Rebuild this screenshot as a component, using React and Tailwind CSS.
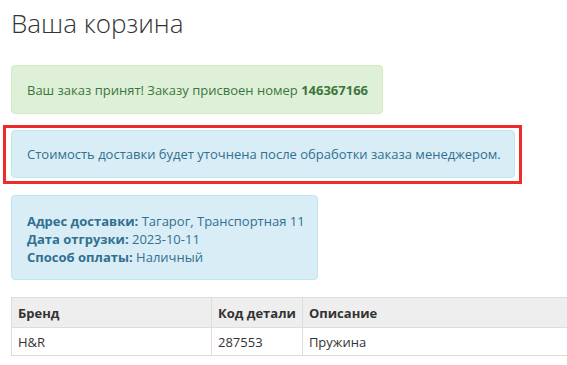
import React from 'react';

const font = { fontFamily: '"Open Sans", "Noto Sans", sans-serif' };

const App = () => {
    return (
        <div className="w-[567px] h-[365px] overflow-hidden bg-white text-[13px] leading-[18px] text-[#333]" style={font}>
            <div className="pl-[11px]">
                <h1 className="pt-[5px] text-[26px] leading-[36px] font-light text-[#333]">Ваша корзина</h1>

                <div className="mt-[24px] w-[372px] h-[49px] flex items-center px-[15px] rounded bg-[#dff0d8] border border-[#d6e9c6] text-[#3c763d] whitespace-nowrap">
                    <span>Ваш заказ принят! Заказу присвоен номер <b className="font-bold">146367166</b></span>
                </div>

                <div className="relative mt-[16px] w-[504px]">
                    <div className="h-[48px] flex items-center px-[15px] rounded bg-[#d9edf7] border border-[#bce8f1] text-[#31708f] whitespace-nowrap">
                        Стоимость доставки будет уточнена после обработки заказа менеджером.
                    </div>
                    <span className="absolute left-[-8px] top-[-5px] w-[519px] h-[59px] border-[3px] border-[#ee2a2a] pointer-events-none" />
                </div>

                <div className="mt-[17px] w-[307px] h-[85px] px-[15px] pt-[16px] rounded bg-[#d9edf7] border border-[#bce8f1] text-[#31708f] whitespace-nowrap">
                    <div><b className="font-bold">Адрес доставки:</b> Тагарог, Транспортная 11</div>
                    <div><b className="font-bold">Дата отгрузки:</b> 2023-10-11</div>
                    <div><b className="font-bold">Способ оплаты:</b> Наличный</div>
                </div>

                <table className="mt-[17px] w-[640px] border-collapse border border-[#ddd]">
                    <thead>
                        <tr className="bg-[#eeeeee] h-[30px]">
                            <th className="w-[200px] border border-[#ddd] px-[6px] text-left font-bold">Бренд</th>
                            <th className="w-[89px] border border-[#ddd] px-[6px] text-left font-bold whitespace-nowrap">Код детали</th>
                            <th className="border border-[#ddd] px-[6px] text-left font-bold">Описание</th>
                        </tr>
                    </thead>
                    <tbody>
                        <tr className="h-[28px]">
                            <td className="border border-[#ddd] px-[6px]">H&amp;R</td>
                            <td className="border border-[#ddd] px-[6px]">287553</td>
                            <td className="border border-[#ddd] px-[6px]">Пружина</td>
                        </tr>
                    </tbody>
                </table>
            </div>
        </div>
    );
};

export default App;
